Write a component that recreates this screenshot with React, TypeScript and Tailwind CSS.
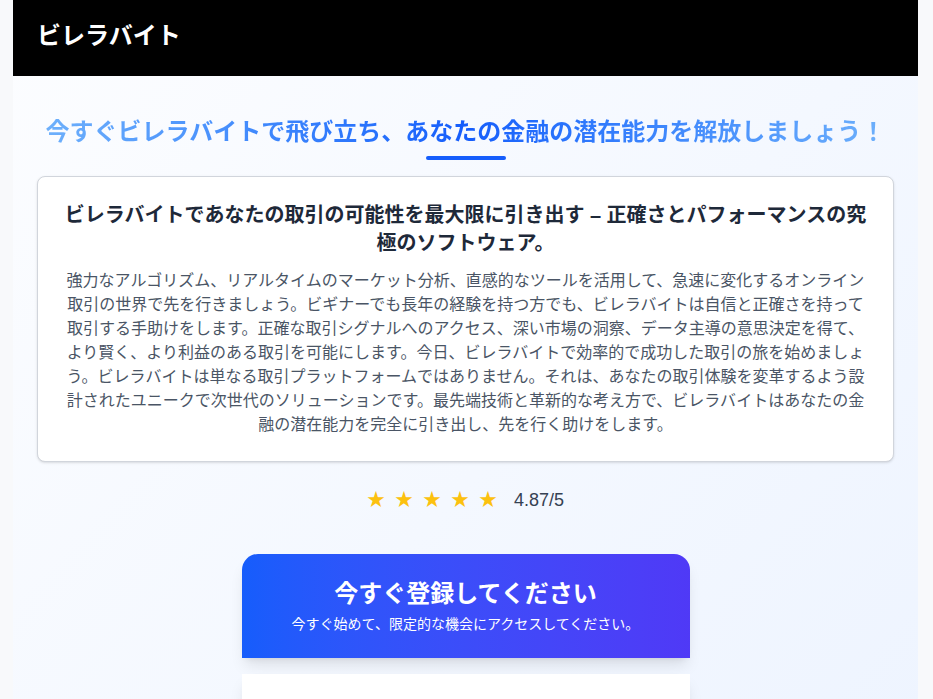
import React from "react"

const stars = [0, 1, 2, 3, 4]

export default function App() {
  return (
    <div
      className="min-h-screen bg-[#f8f9fb]"
      style={{ fontFamily: '"Liberation Sans", "Noto Sans CJK JP", sans-serif' }}
    >
      <div className="w-[905px] ml-[13px] bg-gradient-to-br from-[#fcfdff] to-[#ecf3ff] min-h-screen">
        {/* Header */}
        <header className="bg-black px-6 pt-5 pb-6">
          <h1 className="text-2xl font-bold text-white">ビレラバイト</h1>
        </header>

        {/* Main */}
        <main className="px-6 pt-10 pb-10">
          <h2 className="text-2xl font-bold text-center bg-gradient-to-r from-[#6fb1fb] via-blue-600 to-[#6fb1fb] bg-clip-text text-transparent">
            今すぐビレラバイトで飛び立ち、あなたの金融の潜在能力を解放しましょう！
          </h2>
          <div className="w-20 h-1 bg-blue-600 rounded-full mx-auto mt-2"></div>

          <div className="mt-4 bg-white border border-gray-300 rounded-lg shadow-sm p-6 text-center">
            <h3 className="text-xl font-bold text-gray-800 mb-3">
              ビレラバイトであなたの取引の可能性を最大限に引き出す – 正確さとパフォーマンスの究極のソフトウェア。
            </h3>
            <p className="text-base text-gray-600">
              強力なアルゴリズム、リアルタイムのマーケット分析、直感的なツールを活用して、急速に変化するオンライン取引の世界で先を行きましょう。ビギナーでも長年の経験を持つ方でも、ビレラバイトは自信と正確さを持って取引する手助けをします。正確な取引シグナルへのアクセス、深い市場の洞察、データ主導の意思決定を得て、より賢く、より利益のある取引を可能にします。今日、ビレラバイトで効率的で成功した取引の旅を始めましょう。ビレラバイトは単なる取引プラットフォームではありません。それは、あなたの取引体験を変革するよう設計されたユニークで次世代のソリューションです。最先端技術と革新的な考え方で、ビレラバイトはあなたの金融の潜在能力を完全に引き出し、先を行く助けをします。
            </p>
          </div>

          {/* Rating */}
          <div className="mt-6 flex items-center justify-center h-7">
            <div className="flex gap-[10px]">
              {stars.map((s) => (
                <span key={s} className="w-[18px] text-center text-[18px] leading-7 text-[#fcc10f]">
                  ★
                </span>
              ))}
            </div>
            <span className="ml-[17px] text-lg text-gray-700">4.87/5</span>
          </div>

          {/* CTA */}
          <div className="mt-10 w-[448px] mx-auto">
            <div className="bg-gradient-to-r from-blue-600 to-indigo-600 rounded-t-2xl shadow-lg py-6 px-6 text-center text-white">
              <h2 className="text-2xl font-bold mb-1">今すぐ登録してください</h2>
              <p className="text-sm">今すぐ始めて、限定的な機会にアクセスしてください。</p>
            </div>
            <div className="mt-4 bg-white shadow-lg p-6 h-64"></div>
          </div>
        </main>
      </div>
    </div>
  )
}
